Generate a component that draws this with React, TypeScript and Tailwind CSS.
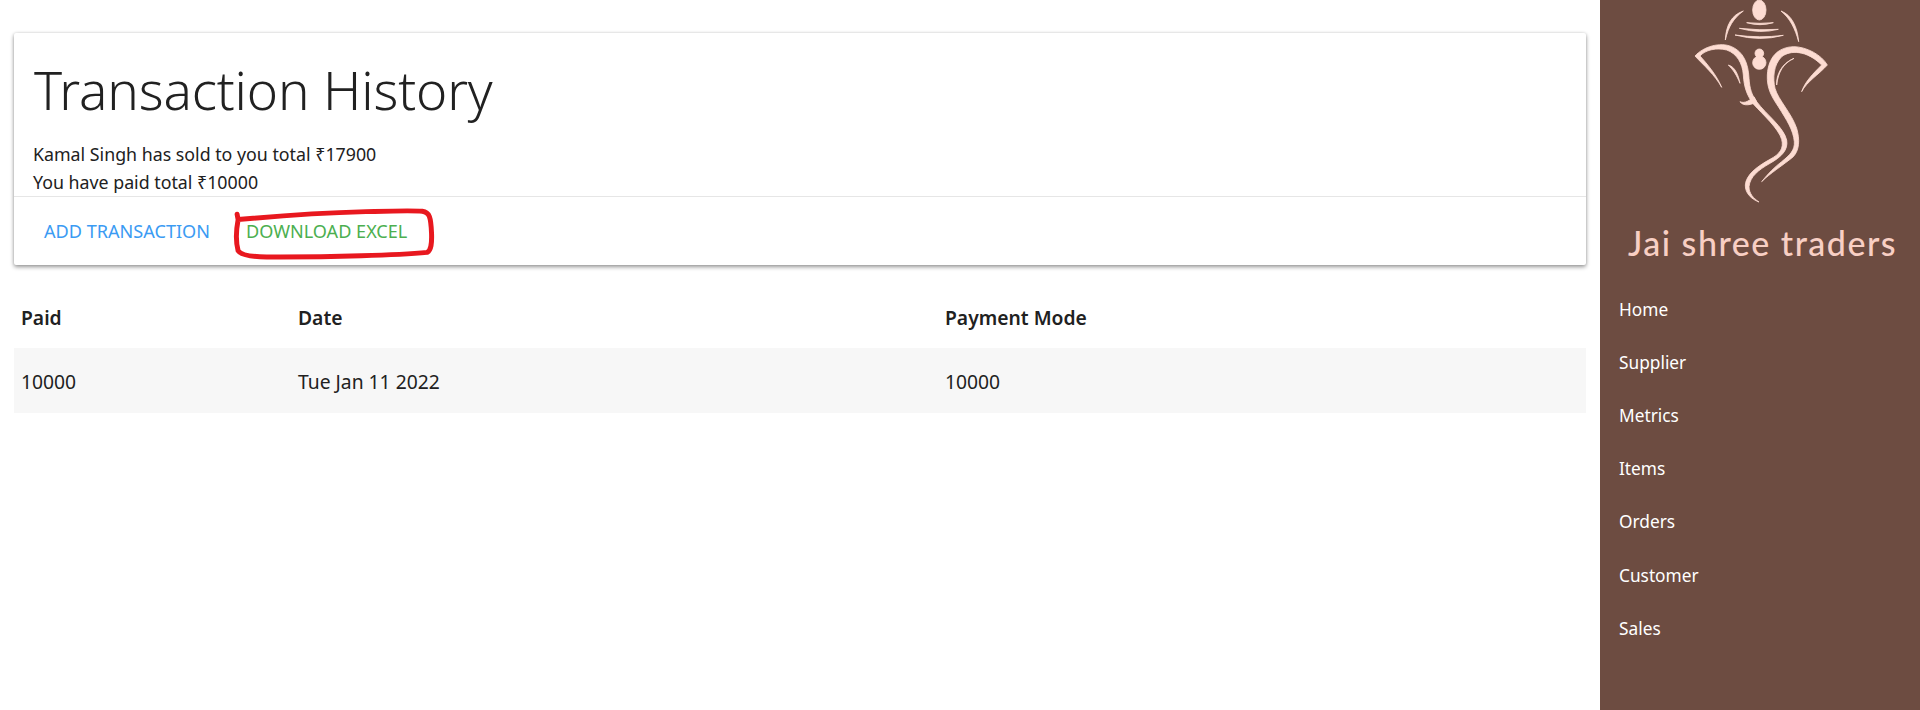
const navItems = ["Home", "Supplier", "Metrics", "Items", "Orders", "Customer", "Sales"];

function Logo() {
  return (
    <svg viewBox="0 0 960 630" className="block w-[320px] h-[210px]" fill="#fddcd2" stroke="#fddcd2" strokeWidth="2.5" strokeLinejoin="round">
      <ellipse cx="478" cy="30" rx="20" ry="30" />
      <path d="M430 33C395 45 378 75 376 120C385 80 400 55 430 33Z" />
      <path d="M543 33C575 45 592 80 596 125C585 85 570 55 543 33Z" />
      <path d="M440 68Q480 72 520 68Q480 80 440 68Z" />
      <path d="M418 85Q480 92 535 88Q480 102 418 85Z" />
      <path d="M405 105Q480 115 550 106Q480 125 405 105Z" />
      <circle cx="478" cy="188" r="20" />
      <circle cx="478" cy="160" r="13" />
      <path d="M285 168C310 140 360 125 395 140C430 155 445 190 447 235C449 265 455 285 470 305C500 345 550 380 560 420C565 450 545 470 510 490C475 510 450 530 447 560C447 580 460 595 477 606C455 598 435 580 436 555C438 525 470 500 510 478C540 462 552 445 545 418C535 385 490 345 460 312C440 285 432 260 430 225C428 190 410 160 380 150C350 142 315 150 300 168C320 190 350 225 365 262C345 225 310 195 285 168Z" />
      <path d="M420 305C435 312 450 300 462 290L470 305C455 315 430 320 420 305Z" />
      <path d="M682 195C665 165 620 140 580 140C535 142 505 170 502 225C500 265 515 290 535 320C560 360 580 390 583 425C585 450 570 465 545 485C525 500 505 520 485 545C510 520 550 495 580 470C598 450 600 420 590 385C575 340 535 300 525 265C518 235 520 195 545 170C570 150 620 150 665 195C640 220 615 245 605 275C620 245 655 225 682 195Z" />
      <path d="M385 195C405 200 415 225 420 250C410 225 400 210 385 195Z" />
      <path d="M582 175C550 190 535 215 530 255C528 225 545 190 582 175Z" />
    </svg>
  );
}

export default function App() {
  return (
    <div className="flex h-[710px] w-[1920px] overflow-hidden bg-white font-['Noto_Sans',sans-serif] text-[#212121]">
      <main className="w-[1600px] px-[14px] pt-[33px]">
        <section className="relative h-[232px] rounded-[2px] bg-white shadow-[0_2px_4px_rgba(0,0,0,0.4),0_0_3px_rgba(0,0,0,0.12)]">
          <div className="h-[163px] px-[19px] pt-[17px]">
            <h1 className="h-[76px] pl-[1px] text-[53px] font-light leading-[80px] tracking-[-0.15px]">Transaction History</h1>
            <p className="mt-[14px] text-[17.8px] leading-[28px]">Kamal Singh has sold to you total ₹17900</p>
            <p className="text-[17.8px] leading-[28px]">You have paid total ₹10000</p>
          </div>
          <div className="flex h-[69px] items-center gap-[36px] border-t border-[#e6e6e6] px-[30px] pt-[1px] text-[18.1px]">
            <button className="text-[#3b9bf3]">ADD TRANSACTION</button>
            <button className="text-[#4caf50]">DOWNLOAD EXCEL</button>
          </div>
          {/* red marker drawn over the screenshot */}
          <svg
            viewBox="700 560 610 160"
            className="absolute left-[219px] top-[174px] h-[53px] w-[203px]"
            fill="none"
            stroke="#e8181f"
            strokeWidth="15"
            strokeLinecap="round"
            strokeLinejoin="round"
          >
            <path d="M711 582L714 598C800 590 950 578 1100 574C1180 572 1240 570 1270 573C1292 576 1296 590 1298 640C1299 670 1297 690 1285 697C1200 705 1000 712 800 711C750 710 722 705 714 692C708 670 708 630 714 598" />
          </svg>
        </section>
        <table className="mt-[20px] w-[1572px] table-fixed border-collapse text-left text-[19.3px]">
          <thead>
            <tr className="h-[63px]">
              <th className="w-[277px] pl-[7px] pt-[4px] font-semibold">Paid</th>
              <th className="w-[647px] pl-[7px] pt-[4px] font-semibold">Date</th>
              <th className="pl-[7px] pt-[4px] font-semibold">Payment Mode</th>
            </tr>
          </thead>
          <tbody>
            <tr className="h-[65px] bg-[#f7f7f7]">
              <td className="pl-[7px] pt-[4px]">10000</td>
              <td className="pl-[7px] pt-[4px]">Tue Jan 11 2022</td>
              <td className="pl-[7px] pt-[4px]">10000</td>
            </tr>
          </tbody>
        </table>
      </main>
      <aside className="w-[320px] bg-[#6d4c41]">
        <Logo />
        <div className="pl-[28px] font-['Lato',sans-serif] text-[34px] font-medium leading-[66px] tracking-[1.5px] text-[#f8cfc4]">Jai shree traders</div>
        <nav className="mt-[7px] flex flex-col">
          {navItems.map((item) => (
            <a key={item} className="flex h-[53.2px] items-center pl-[19px] text-[17.3px] text-white">
              {item}
            </a>
          ))}
        </nav>
      </aside>
    </div>
  );
}
